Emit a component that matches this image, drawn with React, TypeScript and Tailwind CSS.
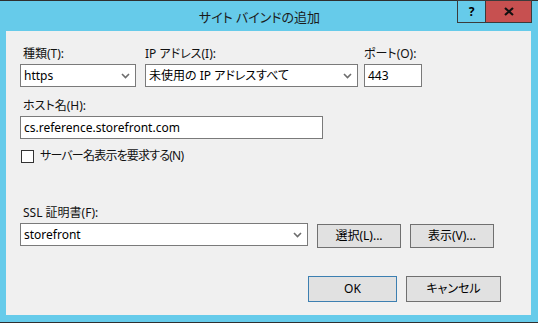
import React from 'react';

const font = "font-['Noto_Sans','Noto_Sans_CJK_JP',sans-serif] [font-feature-settings:'palt']";

function Chevron() {
  return (
    <svg width="9" height="6" viewBox="0 0 9 6" className="shrink-0">
      <path d="M1 1 L4.5 4.5 L8 1" fill="none" stroke="#6d6d6d" strokeWidth="1.6" />
    </svg>
  );
}

function Select({ value, className }: { value: string; className: string }) {
  return (
    <div
      className={`flex h-[23px] items-center justify-between border border-[#7a7a7a] bg-white pl-[3px] pr-[5px] text-[12px] text-black ${className}`}
    >
      <span>{value}</span>
      <Chevron />
    </div>
  );
}

function Button({ label, className }: { label: string; className: string }) {
  return (
    <div
      className={`flex items-center justify-center border bg-[#e1e1e1] text-[12px] text-black ${className}`}
    >
      {label}
    </div>
  );
}

export default function App() {
  return (
    <div className={`${font} flex h-[323px] w-[538px] flex-col border-y border-[#2f2f2f] bg-[#66cbea]`}>
      {/* Title bar */}
      <div className="flex h-[30px] shrink-0">
        <div className="flex flex-1 items-center justify-center pl-[62px] pt-[3px] text-[13px] text-[#1b1b1b]">
          サイト バインドの追加
        </div>
        <div className="-mt-px mr-[6px] flex h-[23px]">
          <div className="flex w-[29px] items-center justify-center border border-[#3b3b3b] text-[12px] font-bold text-black">
            ?
          </div>
          <div className="flex w-[46px] items-center justify-center border border-l-0 border-[#3b3b3b] bg-[#c75050]">
            <svg width="10" height="9" viewBox="0 0 10 9">
              <path d="M1 1 L9 8 M9 1 L1 8" stroke="#111" strokeWidth="2.2" />
            </svg>
          </div>
        </div>
      </div>

      {/* Client area */}
      <div className="ml-[6px] mr-[7px] flex h-[284px] shrink-0 flex-col bg-[#f0f0f0] pl-[14px] pt-[15px] text-[12px] text-[#111]">
        <div className="flex gap-[9px]">
          <div className="flex flex-col gap-[2px]">
            <span className="h-[16px] pl-[3px] leading-[16px]">種類(T):</span>
            <Select value="https" className="w-[116px]" />
          </div>
          <div className="flex flex-col gap-[2px]">
            <span className="h-[16px] leading-[16px]">IP アドレス(I):</span>
            <Select value="未使用の IP アドレスすべて" className="w-[213px]" />
          </div>
          <div className="-ml-[3px] flex flex-col gap-[2px]">
            <span className="h-[16px] leading-[16px]">ポート(O):</span>
            <div className="flex h-[23px] w-[58px] items-center border border-[#7a7a7a] bg-white pl-[3px] text-black">
              443
            </div>
          </div>
        </div>

        <div className="mt-[11px] flex flex-col gap-[2px]">
          <span className="h-[16px] pl-[3px] leading-[16px]">ホスト名(H):</span>
          <div className="flex h-[23px] w-[303px] items-center border border-[#7a7a7a] bg-white pl-[3px] text-black">
            cs.reference.storefront.com
          </div>
        </div>

        <div className="mt-[8px] flex items-center gap-[6px] pl-px">
          <div className="h-[13px] w-[13px] border border-[#333] bg-white" />
          <span className="tracking-[-0.8px]">サーバー名表示を要求する(N)</span>
        </div>

        <div className="mt-[40px] flex flex-col gap-[2px]">
          <span className="h-[16px] pl-[3px] leading-[16px]">SSL 証明書(F):</span>
          <div className="flex items-start gap-[9px]">
            <Select value="storefront" className="w-[288px]" />
            <Button label="選択(L)..." className="mt-px h-[24px] w-[84px] border-[#707070]" />
            <Button label="表示(V)..." className="mt-px h-[24px] w-[84px] border-[#707070]" />
          </div>
        </div>

        <div className="mt-[28px] flex justify-end gap-[9px] pr-[30px]">
          <Button label="OK" className="h-[26px] w-[89px] border-[#3c7fb1]" />
          <Button label="キャンセル" className="h-[26px] w-[95px] border-[#707070]" />
        </div>
      </div>
    </div>
  );
}
